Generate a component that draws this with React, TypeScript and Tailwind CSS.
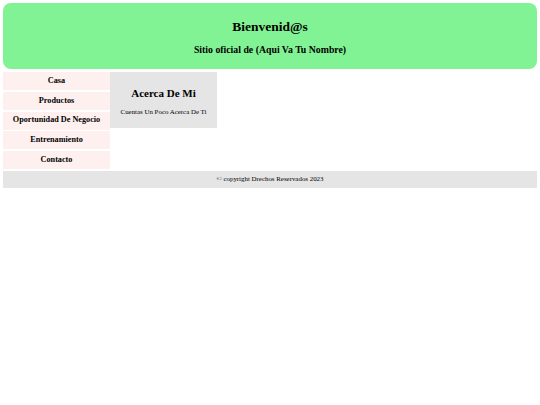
import React from "react";

const links = ["Casa", "Productos", "Oportunidad De Negocio", "Entrenamiento", "Contacto"];

const App = () => {
  return (
    <div className="min-h-screen bg-white p-[3px] font-['Liberation_Serif',serif] text-black">
      <header className="flex h-[66px] flex-col items-center rounded-[8px] bg-[#82f394] px-2">
        <h1 className="mt-[17px] text-[13.5px] font-bold leading-none">Bienvenid@s</h1>
        <h3 className="mt-[11px] text-[9.8px] font-bold leading-none">Sitio oficial de (Aqui Va Tu Nombre)</h3>
      </header>

      <div className="mt-[3px] flex">
        <nav className="flex w-[107px] flex-col gap-[1.75px]">
          {links.map((link) => (
            <a
              key={link}
              href="#"
              className="flex h-[18px] items-center justify-center bg-[#fdf0ef] text-[8.2px] font-bold"
            >
              {link}
            </a>
          ))}
        </nav>

        <section className="flex h-[56px] w-[107px] flex-col items-center bg-[#e5e5e5]">
          <h2 className="mt-[16px] text-[11px] font-bold leading-none">Acerca De Mi</h2>
          <p className="mt-[10px] text-[6.9px] leading-none">Cuentas Un Poco Acerca De Ti</p>
        </section>
      </div>

      <footer className="mt-[2px] flex h-[17px] items-center justify-center bg-[#e5e5e5] text-[6.9px]">
        © copyright Drechos Reservados 2023
      </footer>
    </div>
  );
};

export default App;
